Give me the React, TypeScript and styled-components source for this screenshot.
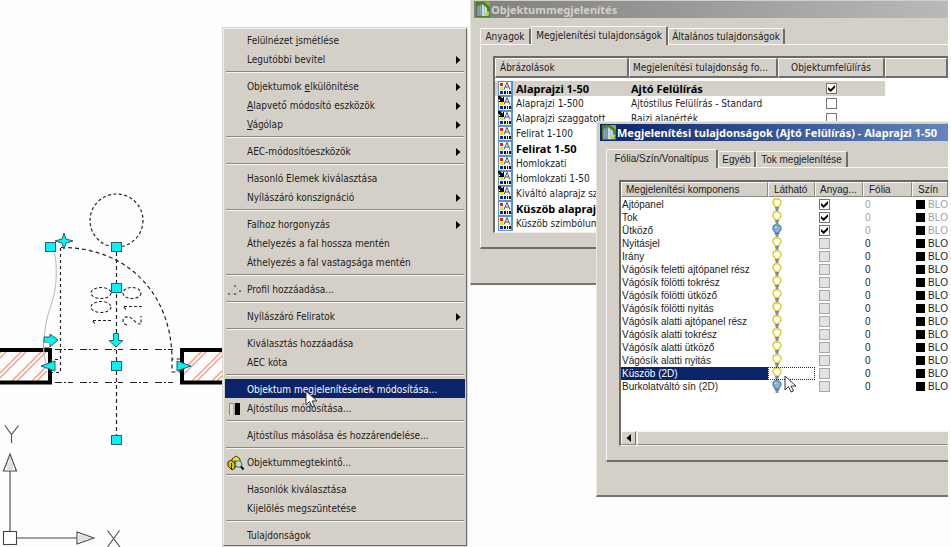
import React from 'react';
import styled, { createGlobalStyle, css } from 'styled-components';

const FACE = '#d4d0c8';
const NAVY = '#0a246a';
const UI = '"DejaVu Sans Condensed", "DejaVu Sans", sans-serif';
const UI_BOLD = '"Noto Sans", "Open Sans", sans-serif';
const MS_SANS = '"Liberation Sans", Arial, sans-serif';

const GlobalStyle = createGlobalStyle`
  *, *::before, *::after { box-sizing: border-box; }
  html, body { margin: 0; background: #fefefe; }
  button, input { font: inherit; color: inherit; margin: 0; padding: 0; }
  svg { flex: none; }
`;

const Desktop = styled.main`
  position: relative;
  width: 100%;
  height: 100vh;
  overflow: hidden;
  background: #fefefe;
  color: #1c1c1c;
  font: 10px/13px ${UI};
`;

/* ---------- drawing area ---------- */

const Canvas = styled.svg`
  position: absolute;
  left: 0;
  top: 0;
`;

const Pointer = styled.svg<{ $x: number; $y: number }>`
  position: absolute;
  left: ${(p) => p.$x}px;
  top: ${(p) => p.$y}px;
  pointer-events: none;
`;

/* ---------- context menu ---------- */

const Menu = styled.div`
  position: absolute;
  left: 222px;
  top: 27px;
  width: 246px;
  padding: 1px;
  background: ${FACE};
  border: 2px solid;
  border-color: #f1efeb #6a6a68 #6a6a68 #f1efeb;
  outline: 1px solid #d8d6d0;
  outline-offset: -1px;
`;

const MenuRow = styled.button<{ $active?: boolean }>`
  display: grid;
  grid-template-columns: 22px 1fr 9px;
  align-items: center;
  width: 100%;
  height: 19px;
  padding-top: 2px;
  border: 0;
  text-align: left;
  background: ${(p) => (p.$active ? NAVY : 'transparent')};
  color: ${(p) => (p.$active ? '#fff' : '#1c1c1c')};
`;

const MenuIcon = styled.span`
  display: flex;
  padding-left: 2px;
`;

const MenuLabel = styled.span`
  white-space: nowrap;
`;

const MenuRule = styled.hr`
  height: 2px;
  margin: 3px 1px;
  border: 0;
  border-top: 1px solid #8a8884;
  border-bottom: 1px solid #f6f5f2;
`;

/* ---------- dialogs ---------- */

const Dialog = styled.section<{ $x: number; $y: number; $pad: number }>`
  position: absolute;
  left: ${(p) => p.$x}px;
  top: ${(p) => p.$y}px;
  right: 3px;
  padding: 2px 0 ${(p) => p.$pad}px 3px;
  background: ${FACE};
  border-left: 1px solid #e8e6e1;
  border-top: 1px solid #f1efeb;
  border-bottom: 2px solid #77756f;
  overflow: hidden;
`;

const TitleBar = styled.header<{ $active?: boolean }>`
  display: flex;
  align-items: center;
  gap: 1px;
  height: 17px;
  padding-left: 2px;
  white-space: nowrap;
  font: bold 11px/17px ${UI_BOLD};
  color: ${(p) => (p.$active ? '#fff' : '#d4d0c8')};
  background: ${(p) =>
    p.$active
      ? 'linear-gradient(to right, #0a246a, #6384bb)'
      : 'linear-gradient(to right, #808080, #b9b9b9)'};
`;

const TitleText = styled.h2`
  margin: 0;
  font: inherit;
`;

const TabBar = styled.div<{ $top: number }>`
  display: flex;
  align-items: flex-end;
  margin: ${(p) => p.$top}px 0 0 6px;
`;

const Tab = styled.button<{ $active?: boolean; $width: number }>`
  position: relative;
  width: ${(p) => p.$width}px;
  height: ${(p) => (p.$active ? 19 : 16)}px;
  margin-bottom: ${(p) => (p.$active ? -1 : 0)}px;
  padding-bottom: ${(p) => (p.$active ? 1 : 0)}px;
  border: 0;
  border-left: 1px solid #f8f7f5;
  border-top: 1px solid #f8f7f5;
  border-right: 2px solid #6f6d69;
  border-radius: 2px 2px 0 0;
  background: ${FACE};
  white-space: nowrap;
`;

const Panel = styled.div<{ $pad: string }>`
  margin-left: 6px;
  padding: ${(p) => p.$pad};
  border-left: 1px solid #f8f7f5;
  border-top: 1px solid #f8f7f5;
  border-bottom: 2px solid #6f6d69;
`;

const ListBox = styled.div<{ $height: number }>`
  display: flex;
  flex-direction: column;
  height: ${(p) => p.$height}px;
  border: 2px solid #6a6864;
  border-right: 0;
  border-bottom: 1px solid #f1efeb;
  background: #fff;
  overflow: hidden;
`;

const Table = styled.table`
  width: 100%;
  table-layout: fixed;
  border-collapse: separate;
  border-spacing: 0;
`;

const Col = styled.col<{ $width?: number }>`
  ${(p) => (p.$width ? `width: ${p.$width}px;` : '')}
`;

const Head = styled.th<{ $height: number; $indent?: number; $center?: boolean; $strong?: boolean }>`
  height: ${(p) => p.$height}px;
  padding: 0 0 0 ${(p) => p.$indent ?? 4}px;
  border: 1px solid;
  border-color: #f8f7f5 #8a8884 #8a8884 #f8f7f5;
  ${(p) => p.$strong && css`
    border-right: 2px solid #6f6d69;
    border-bottom: 2px solid #6f6d69;
  `}
  background: ${FACE};
  font-weight: normal;
  text-align: ${(p) => (p.$center ? 'center' : 'left')};
  white-space: nowrap;
  overflow: hidden;
`;

const StyleRow = styled.tr<{ $bold?: boolean }>`
  height: 15px;
  ${(p) => p.$bold && css`font: bold 11px/13px ${UI_BOLD}; color: #000;`}
`;

const StyleCell = styled.td<{ $selected?: boolean; $indent?: number }>`
  height: 15px;
  padding: 0 0 0 ${(p) => p.$indent ?? 0}px;
  line-height: 13px;
  white-space: nowrap;
  overflow: hidden;
  background: ${(p) => (p.$selected ? FACE : 'transparent')};
`;

const StyleName = styled.span`
  display: flex;
  align-items: center;
  gap: 3px;
  height: 15px;
`;

const Spacer = styled.td<{ $height: number }>`
  height: ${(p) => p.$height}px;
  padding: 0;
`;

const Check = styled.input<{ $muted?: boolean }>`
  appearance: none;
  display: block;
  position: relative;
  width: 11px;
  height: 11px;
  margin: 0 auto;
  border: 1px solid ${(p) => (p.$muted ? '#a8a8a8' : '#77756f')};
  background: ${(p) => (p.$muted ? '#e2e2e2' : '#fff')};
  &:checked::before {
    content: '';
    display: block;
    width: 7px;
    height: 7px;
    margin: 1px;
    background: #000;
    clip-path: polygon(0 30%, 38% 62%, 100% 0, 100% 38%, 38% 100%, 0 66%);
  }
`;

const PartCell = styled.td<{ $selected?: boolean; $focus?: boolean; $dim?: boolean; $indent?: number }>`
  height: 13px;
  padding: 0 0 0 ${(p) => p.$indent ?? 0}px;
  line-height: 13px;
  white-space: nowrap;
  overflow: hidden;
  background: ${(p) => (p.$selected ? NAVY : 'transparent')};
  color: ${(p) => (p.$selected ? '#fff' : p.$dim ? '#a0a0a0' : '#1c1c1c')};
  ${(p) => p.$focus && css`outline: 1px dotted #222; outline-offset: -1px;`}
`;

const PartCheck = styled(Check)`
  margin: 1px 0;
`;

const ColorCell = styled.span`
  display: flex;
  align-items: center;
  gap: 3px;
`;

const Swatch = styled.span`
  flex: none;
  width: 9px;
  height: 9px;
  background: #000;
`;

const Scrollbar = styled.div`
  display: flex;
  height: 14px;
  margin-top: auto;
  background: #ecebe7;
`;

const ScrollButton = styled.button`
  display: grid;
  place-items: center;
  width: 15px;
  border: 1px solid;
  border-color: #f8f7f5 #6f6d69 #8a8884 #f8f7f5;
  background: ${FACE};
`;

const ScrollThumb = styled.div`
  flex: 1;
  margin-left: 1px;
  border: 1px solid;
  border-color: #f8f7f5 ${FACE} #8a8884 #f8f7f5;
  background: ${FACE};
`;

/* ---------- icons ---------- */

const AppIcon = () => (
  <svg width="14" height="15" viewBox="0 0 14 15">
    <rect width="14" height="15" fill="#4e7d2a" />
    <path d="M0 0h14v5L8 0z" fill="#84b52c" />
    <path d="M1 4l5-2v12H1z" fill="#6f8fa3" />
    <path d="M6 2l5 4v8H6z" fill="#c8dbe4" />
    <path d="M2.500 5v8M4.500 4v9" stroke="#8fabbb" />
    <path d="M8.500 5v8" stroke="#a9c0cd" />
    <path d="M11 9l2.500 1-1 4H9z" fill="#a5dc3a" />
  </svg>
);

const StyleIcon = ({ arrow }: { arrow?: boolean }) => (
  <svg width="15" height="15" viewBox="0 0 15 15">
    <rect width="15" height="15" fill="#5c93c4" />
    <rect x="1" y="1" width="12" height="13" fill="#f2f8fd" />
    <rect x="2" y="2" width="3" height="3" fill="#f01818" />
    <rect x="2" y="6" width="3" height="3" fill="#f4e200" />
    <rect x="2" y="10" width="3" height="3" fill="#1020e0" />
    <path d="M6 8.500L9 1.500l3 7M7 6h4" fill="none" stroke="#4a5560" />
    <path d="M6 10h2v3H6zM9 10h1v3H9zM11 10h2v3h-2z" fill="#111" />
    {arrow && <path d="M0 0l2 0 3 3V1h1v5H1V5h2L0 2z" fill="#000" />}
  </svg>
);

const Bulb = ({ off }: { off?: boolean }) => (
  <svg width="10" height="13" viewBox="0 0 10 13">
    <path
      d="M5 .8C2.600 .8 1 2.400 1 4.400c0 2 2 2.800 2.200 4.600h3.600C7 7.200 9 6.400 9 4.400 9 2.400 7.400 .8 5 .8z"
      fill={off ? '#7db4d8' : '#fffef0'}
      stroke={off ? '#5a86a8' : '#dccb2c'}
      strokeWidth="1.400"
    />
    {off && <path d="M3 3.500l1.500-1" stroke="#e2f2fb" strokeWidth="1.400" />}
    <path d="M3.200 10h3.600M3.600 12h2.800" stroke="#56687c" strokeWidth="1.300" />
  </svg>
);

const Arrow = () => (
  <svg width="5" height="8" viewBox="0 0 5 8">
    <path d="M0 0l4.500 4L0 8z" fill="#000" />
  </svg>
);

const ProfileIcon = () => (
  <svg width="16" height="16" viewBox="0 0 16 16">
    <path d="M2.500 12L8 4l5 5-3 3z" fill="none" stroke="#b4b2ae" strokeDasharray="2 2" />
    <path d="M1 11h2v2H1zM7 3h2v2H7zM12 8h2v2h-2zM7 11h2v2H7z" fill="#77777c" />
  </svg>
);

const DoorIcon = () => (
  <svg width="16" height="16" viewBox="0 0 16 16">
    <path d="M2.500 14V2.500H7V14" fill="#dedcd6" stroke="#8a8884" />
    <rect x="8" y="2" width="5" height="12" fill="#000" />
  </svg>
);

const ViewerIcon = () => (
  <svg width="18" height="16" viewBox="0 0 18 16">
    <path d="M5 4l4-3 4 3v5l-4 3-4-3z" fill="#f3e12a" stroke="#3c3800" />
    <path d="M1 7l3-2 4 3v5l-3 2-4-4z" fill="#d8c414" stroke="#2c2800" />
    <path d="M4.500 8v6M8 5v4" stroke="#2c2800" />
    <circle cx="11.500" cy="9" r="3.300" fill="#b5dde6" stroke="#5a6468" />
    <path d="M14 11.500l2.500 3" stroke="#000" strokeWidth="2" />
  </svg>
);

const CursorShape = () => (
  <path d="M1 1v14l3.500-3.500L7 17l2.500-1-2.500-5h5z" fill="#fff" stroke="#333" strokeWidth="1" />
);

/* ---------- floor plan ---------- */

const grips: [number, number][] = [
  [50, 247],
  [116, 247],
  [116, 288],
  [116, 366],
  [116, 440],
];

const FloorPlan = () => (
  <Canvas width="222" height="547" viewBox="0 0 222 547">
    <defs>
      <clipPath id="wall-left"><rect x="0" y="352" width="47" height="29" /></clipPath>
      <clipPath id="wall-right"><rect x="184" y="352" width="38" height="29" /></clipPath>
    </defs>

    <g stroke="#ff7f5e" strokeWidth="1.100">
      <g clipPath="url(#wall-left)">
        {[-22, -17, -2, 3, 18, 23, 38, 43].map((x) => (
          <path key={x} d={`M${x - 10} 385l35-35`} />
        ))}
      </g>
      <g clipPath="url(#wall-right)">
        {[168, 173, 188, 193, 208, 213].map((x) => (
          <path key={x} d={`M${x} 385l35-35`} />
        ))}
      </g>
    </g>
    <path d="M0 350h50v32.500H0M222 350h-40v32.500h40" fill="none" stroke="#000" strokeWidth="4" />

    <path
      d="M53 247c3 10 4 20 3 34-1 18-5 22-8 34-3 10-5 28-4 40l3 12"
      fill="none"
      stroke="#c2c2c2"
      strokeWidth="1.200"
    />
    <g fill="none" stroke="#222" strokeWidth="1.200">
      <circle cx="116.500" cy="220.500" r="26.500" strokeDasharray="3 2.500" />
      <path d="M116.500 252v185" strokeDasharray="4 3" />
      <path d="M60.500 248v124.500h-9v-13h9" strokeDasharray="3 3" />
      <path d="M61 247.500c70 0 111 50 111 112v12.500h8v-13h-8" strokeDasharray="4 3" />
      <path d="M55 349.500h126M55 382.500h126" strokeDasharray="7 2 2 2 5 7" />
    </g>
    <g fill="none" stroke="#222" strokeWidth="1.100" strokeDasharray="3 2">
      <ellipse cx="101" cy="293" rx="10" ry="5.500" />
      <ellipse cx="101" cy="307" rx="10" ry="5.500" />
      <ellipse cx="132" cy="293" rx="9" ry="5.500" />
      <path d="M111 320.500H92l3 3" />
      <path d="M142 306.500h-19l3 3" />
      <path d="M127 325c-6-1-5-9 1-8 5 0 8 8 13 7v-8" />
    </g>

    <g fill="#00f4f8" stroke="#2a5f66">
      {grips.map(([x, y]) => (
        <rect key={`${x}-${y}`} x={x - 4.500} y={y - 4.500} width="10" height="9" />
      ))}
      <path d="M64 233l2 6 7 2-7 2-2 6-2-6-7-2 7-2z" />
      <path d="M44 337h6v-3l8 6-8 7v-3h-6z" />
      <path d="M113.500 333.500h5v7h4.500l-7 6.500-7-6.500h4.500z" />
      <path d="M41 366l14-5v10z" />
      <path d="M191 366l-14-5v10z" />
    </g>
    <rect x="43.500" y="342.500" width="6" height="5" fill="#fff" stroke="#999" />

    <g fill="#fff" stroke="#444" strokeWidth="1.100">
      <path d="M10 531V470M17 538h60" />
      <rect x="3.500" y="531.500" width="13" height="13" />
      <path d="M10 454l6.500 17h-13zM94 538l-17-6v12z" />
      <path d="M10 458v13M8 463v8M12 463v8M90 538H77M86 536h-9M86 540h-9" stroke="#c4c4c4" />
    </g>
    <g fill="none" stroke="#555" strokeWidth="1.200">
      <path d="M5 425.500l6.500 9 7-9M11.500 434.500v8.500" />
      <path d="M107.500 530.500l12.500 16.500M119.500 530.500L107.500 547" />
    </g>
  </Canvas>
);

/* ---------- data ---------- */

type Item = { label: React.ReactNode; sub?: boolean; active?: boolean; icon?: React.ReactNode };

const menuGroups: Item[][] = [
  [{ label: <>Felülnézet <u>i</u>smétlése</> }, { label: 'Legutóbbi bevitel', sub: true }],
  [
    { label: <>Objektumok <u>e</u>lkülönítése</>, sub: true },
    { label: <><u>A</u>lapvető módosító eszközök</>, sub: true },
    { label: <><u>V</u>ágólap</>, sub: true },
  ],
  [{ label: 'AEC-módosítóeszközök', sub: true }],
  [{ label: 'Hasonló Elemek kiválasztása' }, { label: 'Nyílászáró konszignáció', sub: true }],
  [
    { label: 'Falhoz horgonyzás', sub: true },
    { label: 'Áthelyezés a fal hossza mentén' },
    { label: 'Áthelyezés a fal vastagsága mentén' },
  ],
  [{ label: 'Profil hozzáadása...', icon: <ProfileIcon /> }],
  [{ label: 'Nyílászáró Feliratok', sub: true }],
  [{ label: 'Kiválasztás hozzáadása' }, { label: 'AEC kóta' }],
  [
    { label: 'Objektum megjelenítésének módosítása...', active: true },
    { label: 'Ajtóstílus módosítása...', icon: <DoorIcon /> },
  ],
  [{ label: 'Ajtóstílus másolása és hozzárendelése...' }],
  [{ label: 'Objektummegtekintő...', icon: <ViewerIcon /> }],
  [{ label: 'Hasonlók kiválasztása' }, { label: 'Kijelölés megszüntetése' }],
  [{ label: 'Tulajdonságok' }],
];

type Style = { name: string; source?: string; bold?: boolean; arrow?: boolean; on?: boolean };

const styles: Style[] = [
  { name: 'Alaprajzi 1-50', source: 'Ajtó Felülírás', bold: true, on: true },
  { name: 'Alaprajzi 1-500', source: 'Ajtóstílus Felülírás - Standard', arrow: true },
  { name: 'Alaprajzi szaggatott', source: 'Rajzi alapérték', arrow: true },
  { name: 'Felirat 1-100' },
  { name: 'Felirat 1-50', bold: true },
  { name: 'Homlokzati' },
  { name: 'Homlokzati 1-50', arrow: true },
  { name: 'Kiváltó alaprajz szimbólum', arrow: true },
  { name: 'Küszöb alaprajzi', bold: true },
  { name: 'Küszöb szimbólum' },
];

type Part = { name: string; material?: boolean; off?: boolean; selected?: boolean };

const parts: Part[] = [
  { name: 'Ajtópanel', material: true },
  { name: 'Tok', material: true },
  { name: 'Ütköző', material: true, off: true },
  { name: 'Nyitásjel' },
  { name: 'Irány' },
  { name: 'Vágósík feletti ajtópanel rész' },
  { name: 'Vágósík fölötti tokrész' },
  { name: 'Vágósík fölötti ütköző' },
  { name: 'Vágósík fölötti nyitás' },
  { name: 'Vágósík alatti ajtópanel rész' },
  { name: 'Vágósík alatti tokrész' },
  { name: 'Vágósík alatti ütköző' },
  { name: 'Vágósík alatti nyitás' },
  { name: 'Küszöb (2D)', selected: true },
  { name: 'Burkolatváltó sín (2D)', off: true },
];

const PartsDialog = styled(Dialog)`
  font-family: ${MS_SANS};
  color: #1c1c1c;
`;

const BulbHolder = styled.span`
  display: block;
  height: 13px;
  padding-left: 4px;
`;

const StylesWindow = () => (
  <Dialog $x={470} $y={-2} $pad={34}>
    <TitleBar>
      <AppIcon />
      <TitleText>Objektummegjelenítés</TitleText>
    </TitleBar>
    <TabBar $top={8} role="tablist">
      <Tab role="tab" $width={51}>Anyagok</Tab>
      <Tab role="tab" aria-selected $active $width={137}>Megjelenítési tulajdonságok</Tab>
      <Tab role="tab" $width={117}>Általános tulajdonságok</Tab>
    </TabBar>
    <Panel $pad="11px 0 14px 12px">
      <ListBox $height={177}>
        <Table>
          <colgroup>
            <Col $width={134} />
            <Col $width={149} />
            <Col $width={107} />
            <Col />
          </colgroup>
          <thead>
            <tr>
              <Head $height={20} $strong>Ábrázolások</Head>
              <Head $height={20} $strong $indent={3}>Megjelenítési tulajdonság fo...</Head>
              <Head $height={20} $strong $indent={0} $center>Objektumfelülírás</Head>
              <Head $height={20} $strong />
            </tr>
          </thead>
          <tbody>
            <tr><Spacer $height={3} colSpan={4} /></tr>
            {styles.map((s) => (
              <StyleRow key={s.name} $bold={s.bold}>
                <StyleCell $selected={s.on} $indent={3}>
                  <StyleName>
                    <StyleIcon arrow={s.arrow} />
                    {s.name}
                  </StyleName>
                </StyleCell>
                <StyleCell $selected={s.on} $indent={2}>{s.source}</StyleCell>
                <StyleCell $selected={s.on}>
                  <Check type="checkbox" defaultChecked={s.on} aria-label={s.name} />
                </StyleCell>
                <StyleCell />
              </StyleRow>
            ))}
          </tbody>
        </Table>
      </ListBox>
    </Panel>
  </Dialog>
);

const PartsWindow = () => (
  <PartsDialog $x={596} $y={121} $pad={33}>
    <TitleBar $active>
      <AppIcon />
      <TitleText>Megjelenítési tulajdonságok (Ajtó Felülírás) - Alaprajzi 1-50</TitleText>
    </TitleBar>
    <TabBar $top={8} role="tablist">
      <Tab role="tab" aria-selected $active $width={112}>Fólia/Szín/Vonaltípus</Tab>
      <Tab role="tab" $width={38}>Egyéb</Tab>
      <Tab role="tab" $width={92}>Tok megjelenítése</Tab>
    </TabBar>
    <Panel $pad="12px 0 14px 12px">
      <ListBox $height={266}>
        <Table>
          <colgroup>
            <Col $width={147} />
            <Col $width={47} />
            <Col $width={48} />
            <Col $width={49} />
            <Col />
          </colgroup>
          <thead>
            <tr>
              <Head $height={15} $indent={4}>Megjelenítési komponens</Head>
              <Head $height={15} $indent={5}>Látható</Head>
              <Head $height={15} $indent={4}>Anyag...</Head>
              <Head $height={15} $indent={5}>Fólia</Head>
              <Head $height={15} $indent={5}>Szín</Head>
            </tr>
          </thead>
          <tbody>
            <tr><Spacer $height={1} colSpan={5} /></tr>
            {parts.map((p) => (
              <tr key={p.name}>
                <PartCell $selected={p.selected} $indent={1}>{p.name}</PartCell>
                <PartCell $focus={p.selected}>
                  <BulbHolder><Bulb off={p.off} /></BulbHolder>
                </PartCell>
                <PartCell $indent={4}>
                  <PartCheck
                    type="checkbox"
                    $muted={!p.material}
                    defaultChecked={p.material}
                    aria-label={p.name}
                  />
                </PartCell>
                <PartCell $dim={p.material} $indent={2}>0</PartCell>
                <PartCell $dim={p.material} $indent={4}>
                  <ColorCell><Swatch />BLO</ColorCell>
                </PartCell>
              </tr>
            ))}
          </tbody>
        </Table>
        <Scrollbar>
          <ScrollButton aria-label="Balra">
            <svg width="5" height="8" viewBox="0 0 5 8"><path d="M5 0v8L.5 4z" fill="#000" /></svg>
          </ScrollButton>
          <ScrollThumb />
        </Scrollbar>
      </ListBox>
    </Panel>
  </PartsDialog>
);

export default function App() {
  return (
    <Desktop>
      <GlobalStyle />
      <FloorPlan />
      <StylesWindow />
      <PartsWindow />
      <Menu role="menu">
        {menuGroups.map((group, g) => (
          <React.Fragment key={g}>
            {g > 0 && <MenuRule />}
            {group.map((item, i) => (
              <MenuRow key={i} role="menuitem" $active={item.active}>
                <MenuIcon>{item.icon}</MenuIcon>
                <MenuLabel>{item.label}</MenuLabel>
                {item.sub && <Arrow />}
              </MenuRow>
            ))}
          </React.Fragment>
        ))}
      </Menu>
      <Pointer $x={305} $y={390} width="14" height="19" viewBox="0 0 14 19"><CursorShape /></Pointer>
      <Pointer $x={784} $y={375} width="14" height="19" viewBox="0 0 14 19"><CursorShape /></Pointer>
    </Desktop>
  );
}
